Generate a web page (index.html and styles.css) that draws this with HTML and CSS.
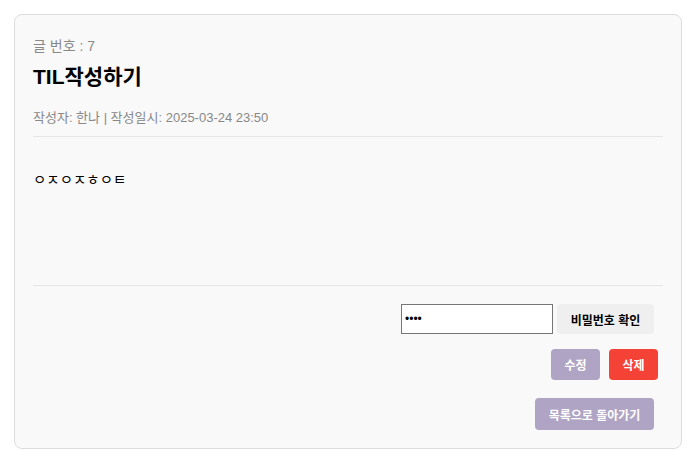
FILE: index.html
```html
<!DOCTYPE html>
<html lang="ko">
<head>
<meta charset="utf-8">
<title>TIL작성하기</title>
<link rel="stylesheet" href="styles.css">
</head>
<body>
<div class="card">
  <p class="post-no">글 번호 : 7</p>
  <h2 class="title">TIL작성하기</h2>
  <p class="meta">작성자: 한나 | 작성일시: 2025-03-24 23:50</p>
  <div class="content">
    <p>ㅇㅈㅇㅈㅎㅇㅌ</p>
  </div>
  <div class="pw-row">
    <input class="pw-input" type="password" value="1234">
    <button class="btn btn-gray">비밀번호 확인</button>
  </div>
  <div class="action-row">
    <button class="btn btn-purple">수정</button>
    <button class="btn btn-red">삭제</button>
  </div>
  <div class="back-row">
    <button class="btn btn-purple btn-back">목록으로 돌아가기</button>
  </div>
</div>
</body>
</html>
```
FILE: styles.css
```css
* { box-sizing: border-box; }
body {
  margin: 14px 17px 0 14px;
  background: #ffffff;
  font-family: "Liberation Sans", Arial, "Noto Sans CJK KR", sans-serif;
  color: #000;
}
.card {
  background: #f9f9f9;
  border: 1px solid #dddddd;
  border-radius: 8px;
  padding: 18px;
}
.post-no {
  margin: 4px 0 0 0;
  font-size: 14px;
  line-height: 18px;
  color: #888888;
}
.title {
  margin: 10px 0 0 0;
  font-size: 21px;
  line-height: 24px;
  font-weight: bold;
}
.meta {
  margin: 21px 0 0 0;
  font-size: 13px;
  line-height: 16px;
  color: #888888;
  padding-bottom: 10px;
  border-bottom: 1px solid #e6e6e6;
}
.content {
  height: 149px;
  border-bottom: 1px solid #e6e6e6;
  padding-top: 35px;
}
.content p {
  margin: 0;
  font-size: 14.5px;
  line-height: 16px;
}
.pw-row {
  display: flex;
  justify-content: flex-end;
  align-items: center;
  gap: 4px;
  margin-top: 18px;
  padding-right: 9px;
}
.pw-input {
  width: 152px;
  height: 30px;
  border: 1px solid #767676;
  background: #fff;
  padding: 0 3px;
  font-size: 12px;
  margin: 0;
}
.btn {
  border: none;
  border-radius: 4px;
  font-family: "Liberation Sans", Arial, "Noto Sans CJK KR", sans-serif;
  font-size: 12px;
  font-weight: bold;
  height: 31px;
  padding: 0;
  margin: 0;
  white-space: nowrap;
  text-align: center;
}
.btn-gray {
  background: #efefef;
  color: #000;
  width: 97px;
  height: 30px;
}
.action-row {
  display: flex;
  justify-content: flex-end;
  gap: 9px;
  margin-top: 15px;
  padding-right: 5px;
}
.btn-purple {
  background: #b0a4c4;
  color: #fff;
  width: 49px;
}
.btn-red {
  background: #f44336;
  color: #fff;
  width: 49px;
}
.back-row {
  display: flex;
  justify-content: flex-end;
  margin-top: 18px;
  padding-right: 9px;
}
.btn-back {
  width: 119px;
  height: 32px;
}
```
